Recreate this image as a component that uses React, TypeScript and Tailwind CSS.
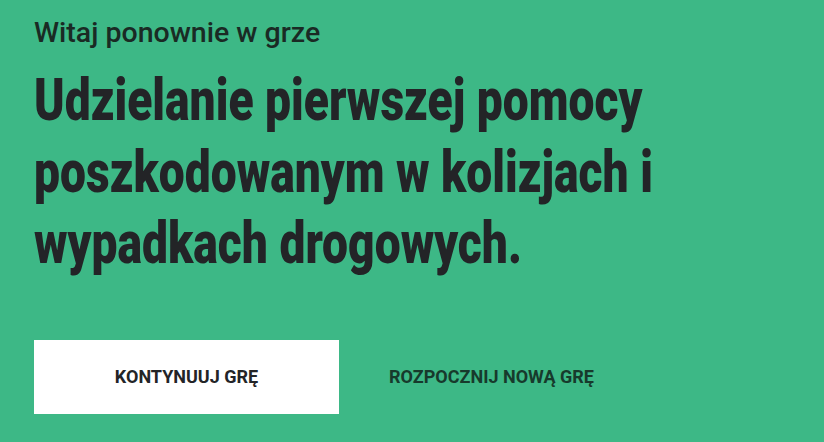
export default function App() {
  return (
    <div className="w-[824px] h-[442px] overflow-hidden bg-[#3db886] pl-[34px] pt-[16px] flex flex-col">
      <p
        className="text-[28.5px] leading-[33px] font-medium text-[#1a2a24]"
        style={{ fontFamily: "Roboto, 'Noto Sans', sans-serif" }}
      >
        Witaj ponownie w grze
      </p>
      <h1
        className="mt-[15px] text-[60px] leading-[71.5px] font-black text-[#232427] origin-left scale-x-[0.77] whitespace-nowrap"
        style={{ fontFamily: "Roboto, 'Noto Sans', sans-serif" }}
      >
        <span className="block">Udzielanie pierwszej pomocy</span>
        <span className="block">poszkodowanym w kolizjach i</span>
        <span className="block">wypadkach drogowych.</span>
      </h1>
      <div className="mt-[61px] flex" style={{ fontFamily: "Roboto, 'Noto Sans', sans-serif" }}>
        <button className="w-[305px] h-[74px] bg-white text-[18px] font-bold uppercase text-[#232427]">
          Kontynuuj grę
        </button>
        <button className="w-[305px] h-[74px] text-[18px] font-bold uppercase text-[#173a2c]">
          Rozpocznij nową grę
        </button>
      </div>
    </div>
  );
}
